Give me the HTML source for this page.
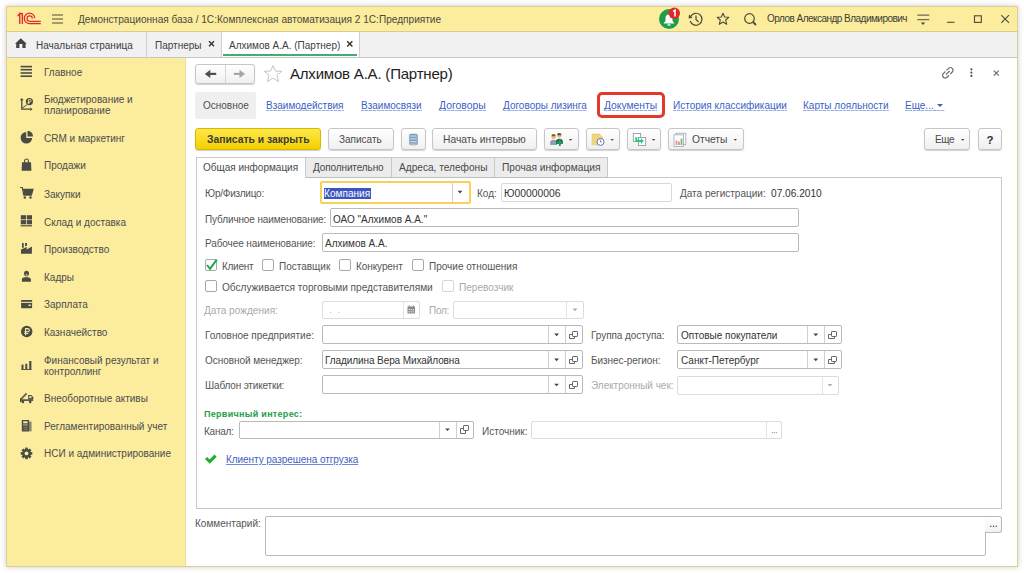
<!DOCTYPE html>
<html><head><meta charset="utf-8">
<style>
*{box-sizing:border-box;margin:0;padding:0}
html,body{width:1024px;height:573px;overflow:hidden;background:#fff;font-family:"Liberation Sans",sans-serif;color:#4d4d4d}
.a{position:absolute}
.t{position:absolute;font-size:10px;line-height:12px;white-space:nowrap}
#win{position:absolute;left:6px;top:6px;width:1012px;height:561px;background:#fff;box-shadow:0 0 6px rgba(0,0,0,.2)}
#title{position:absolute;left:6px;top:6px;width:1012px;height:26px;background:#fbec9e;border-bottom:1px solid #d8cc8e}
#tabs{position:absolute;left:6px;top:32px;width:1012px;height:26px;background:#f1f1f1;border-bottom:1px solid #c6c6c6}
#side{position:absolute;left:6px;top:58px;width:180px;height:509px;background:#fbec9e;border-right:1px solid #ecdc92}
#wb{position:absolute;left:6px;top:6px;width:1012px;height:561px;border:1px solid #dcd090;pointer-events:none}
svg{position:absolute;overflow:visible}
.sep{position:absolute;top:32px;width:1px;height:25px;background:#cfcfcf}
.si{color:#4d4d4d}
.lk{color:#3d5fc4}.lk::after{content:"";position:absolute;left:0;right:0;top:10px;height:1px;background:repeating-linear-gradient(90deg,#9aaee4 0 3px,#d3dbf4 3px 4px)}
.btn{position:absolute;height:22px;border:1px solid #c6c6c6;border-radius:3px;background:linear-gradient(#ffffff,#f0f0f0);box-shadow:0 1px 1px rgba(0,0,0,.18)}
.fld{position:absolute;height:19px;border:1px solid #b9b9b9;border-radius:2px;background:#fff}
.fld.dis{border-color:#dcdcdc}
.dv{position:absolute;top:0;bottom:0;width:1px;background:#d0d0d0}
.lbl{color:#555}
.gray{color:#aaa}
.cb{position:absolute;width:12px;height:12px;border:1px solid #a8a8a8;border-radius:2px;background:#fff}
.cb.dis{border-color:#d6d6d6}
.arr{position:absolute;width:0;height:0;border-left:3px solid transparent;border-right:3px solid transparent;border-top:3px solid #444}
</style></head><body>
<div id="win"></div>
<div id="title"></div>
<div id="tabs"></div>
<div id="side"></div>
<div id="wb"></div>

<!-- TITLE BAR -->
<svg style="left:0;top:0" width="1024" height="32">
  <g fill="none" stroke="#e02a2a" stroke-width="1.25">
    <path d="M19.7 14 H22.4 V23.9 H19.7 Z" fill="#f6cfa0" stroke="none"/>
    <path d="M17.7 16.2 L19.7 13.5 V23.9 M19.7 13.5 H22.4 V23.9"/>
    <path d="M34.7 18.3 A5.2 5.2 0 1 0 29.5 23.6 H40.8"/>
    <path d="M32.4 18.5 A2.7 2.7 0 1 0 29.7 21.3 H40.8"/>
    <path d="M33.6 18.4 A4 4 0 1 0 29.6 22.4 H40" stroke="#f6c8a0" stroke-width=".7"/>
  </g>
  <g stroke="#86825f" stroke-width="1.5">
    <path d="M52 15H63M52 19.1H63M52 23.1H63"/>
  </g>
  <!-- bell -->
  <circle cx="669" cy="19" r="10" fill="#1f9d4b"/>
  <path d="M663.5 23.5 L665.5 21 L665.5 18 A3.5 3.5 0 0 1 672.5 18 L672.5 21 L674.5 23.5 Z" fill="#fff"/>
  <rect x="667.5" y="24.3" width="3" height="1.3" fill="#fff"/>
  <circle cx="674.3" cy="13.3" r="5.7" fill="#e3262b"/>
  <path d="M673.2 11.5 L675 10.2 L675 16.5" stroke="#fff" stroke-width="1.6" fill="none"/>
  <!-- history -->
  <g fill="none" stroke="#4a4a3a" stroke-width="1.2">
    <path d="M690.6 16.5 A6 6 0 1 1 690.2 21"/>
    <path d="M696 15.5 L696 19.5 L698.5 22"/>
  </g>
  <path d="M689 14.5 L692.5 17.8 L688.6 18.6 Z" fill="#4a4a3a"/>
  <!-- star -->
  <path d="M723 13.2 L724.7 17 L728.8 17.3 L725.7 20 L726.7 24.3 L723 22 L719.3 24.3 L720.3 20 L717.2 17.3 L721.3 17 Z" fill="none" stroke="#4a4a3a" stroke-width="1.1" stroke-linejoin="round"/>
  <!-- search -->
  <circle cx="749.5" cy="18.5" r="4.8" fill="none" stroke="#4a4a3a" stroke-width="1.2"/>
  <path d="M753 22 L756 25" stroke="#4a4a3a" stroke-width="1.8"/>
  <!-- filter -->
  <path d="M917.3 15.2H929.2M917.3 19.6H929.2" stroke="#6f6b52" stroke-width="1.3"/>
  <path d="M920.8 22.4 L925.2 22.4 L923 24.9 Z" fill="#4a4a3a"/>
  <!-- min max close -->
  <path d="M947 22.3H954.5" stroke="#4a4a3a" stroke-width="1.1"/>
  <rect x="974.5" y="15.8" width="6.8" height="6.6" fill="none" stroke="#4a4a3a" stroke-width="1.1"/>
  <path d="M1001.3 15.2 L1009 22.8 M1009 15.2 L1001.3 22.8" stroke="#4a4a3a" stroke-width="1.1"/>
</svg>
<div class="t" style="left:78px;top:14px;font-size:10.1px;color:#4a4a3a">Демонстрационная база / 1С:Комплексная автоматизация 2 1С:Предприятие</div>
<div class="t" style="left:767px;top:13px;font-size:10px;letter-spacing:-0.52px;color:#404035">Орлов Александр Владимирович</div>

<!-- OPEN TABS -->
<div class="a" style="left:147px;top:32px;width:74px;height:25px;background:#f1f1f1"></div>
<div class="a" style="left:221px;top:32px;width:138px;height:25px;background:#fff"></div>
<div class="sep" style="left:146px"></div>
<div class="sep" style="left:221px"></div>
<div class="sep" style="left:359px"></div>
<div class="a" style="left:223px;top:54px;width:134px;height:2px;background:#3fb06a"></div>
<svg style="left:0;top:0" width="400" height="60">
  <path d="M15 43.8 L20.85 38.2 L26.7 43.8 L25.6 43.8 L25.6 47.9 L22.4 47.9 L22.4 44 L19.4 44 L19.4 47.9 L16.2 47.9 L16.2 43.8 Z" fill="#444"/>
  <path d="M209 41.2 L214 46.2 M214 41.2 L209 46.2" stroke="#333" stroke-width="1.4"/>
  <path d="M347.2 41.2 L352.4 46.4 M352.4 41.2 L347.2 46.4" stroke="#333" stroke-width="1.4"/>
</svg>
<div class="t" style="left:36px;top:40px;color:#404040">Начальная страница</div>
<div class="t" style="left:155px;top:40px;color:#404040">Партнеры</div>
<div class="t" style="left:229px;top:40px;color:#404040">Алхимов А.А. (Партнер)</div>


<!-- SIDEBAR -->
<svg style="left:0;top:0" width="186" height="573">
 <g fill="#4b4b45">
  <!-- glavnoe -->
  <rect x="20.6" y="65.8" width="11.4" height="1.6"/>
  <rect x="20.6" y="68.9" width="11.4" height="1.6"/>
  <rect x="20.6" y="72.2" width="11.4" height="1.6"/>
  <rect x="20.6" y="75.4" width="11.4" height="1.6"/>
  <!-- budget -->
  <g fill="none" stroke="#4b4b45" stroke-width="1.3">
   <path d="M21.8 99.5 V109.2 H30.5"/>
   <path d="M22.3 108 L26.8 104.8" stroke-width="1"/>
  </g>
  <path d="M19.9 100.2 L21.8 98 L23.7 100.2Z M30.3 107.3 L32.5 109.2 L30.3 111.1Z"/>
  <circle cx="29.4" cy="101.6" r="3.6"/>
  <path d="M28.4 99.6 h1.6 a1.1 1.1 0 0 1 0 2.2 h-1.6 M28.4 99.6 v4.4 M27.5 102.8 h2.4" stroke="#fbec9e" stroke-width=".8" fill="none"/>
  <!-- crm pie -->
  <path d="M26.2 132 A5.8 5.8 0 1 0 32.2 138 L26.2 138 Z"/>
  <path d="M27.5 130.8 A5.5 5.5 0 0 1 33 136.5 L27.5 136.5 Z"/>
  <!-- bag -->
  <path d="M22 162.2 H31 L31.4 170.7 H21.6 Z"/>
  <path d="M24.6 163 V161 A1.9 2 0 0 1 28.4 161 V163" fill="none" stroke="#4b4b45" stroke-width="1.1"/>
  <!-- cart -->
  <path d="M20.2 187.5 H22.3 L23.8 195.2 H31.3 L33 189.3 H22.8" fill="none" stroke="#4b4b45" stroke-width="1.2"/>
  <path d="M23 189.3 H33 L31.4 195 H24 Z"/>
  <circle cx="24.8" cy="197.5" r="1.2"/><circle cx="30.5" cy="197.5" r="1.2"/>
  <!-- sklad -->
  <rect x="20.8" y="215.2" width="5.2" height="4.2"/><rect x="26.8" y="215.2" width="5.2" height="4.2"/>
  <rect x="20.8" y="220.1" width="5.2" height="4.2"/><rect x="26.8" y="220.1" width="5.2" height="4.2"/>
  <rect x="20.6" y="225.2" width="11.4" height="1.2"/>
  <!-- factory -->
  <path d="M21 253.8 V249.6 L26.7 246.9 V249.5 L31.9 246.4 V253.8 Z"/><rect x="22" y="243" width="1.7" height="4.8"/><path d="M25.1 243 H27 V245.5 L25.1 246.4 Z"/>
  <!-- person -->
  <ellipse cx="26.5" cy="273.6" rx="2.5" ry="2.8"/>
  <ellipse cx="26.5" cy="275" rx="1.2" ry="1.3" fill="#fbec9e" opacity=".55"/>
  <path d="M21.9 281.7 V279.6 Q21.9 277.4 24.6 277.3 H28.2 Q30.9 277.4 30.9 279.6 V281.7 Z"/>
  <!-- card -->
  <rect x="21.1" y="299.9" width="11" height="8.3" rx=".6"/>
  <rect x="21.1" y="301.8" width="11" height="1.1" fill="#fbec9e"/>
  <rect x="28.4" y="304.6" width="2.6" height="1.3" fill="#fbec9e"/>
  <!-- ruble -->
  <circle cx="26.7" cy="331.5" r="5.7"/>
  <path d="M25.6 335.3 V328.6 H27.7 A1.6 1.6 0 0 1 27.7 331.8 H24.3 M24.3 333.5 H28.3" stroke="#fbec9e" stroke-width="1.1" fill="none"/>
  <!-- bars -->
  <rect x="21.5" y="364.6" width="2" height="4.7"/>
  <rect x="25.3" y="363.8" width="2" height="5.5"/>
  <rect x="29.2" y="361" width="2.2" height="8.3"/>
  <rect x="21.3" y="369" width="10.3" height=".9"/>
  <!-- truck -->
  <path d="M20.4 398.4 L25.9 392.8 L27.3 394.1 L21.9 399.6 Z" opacity=".85"/>
  <rect x="20" y="398.2" width="1.4" height="4"/>
  <rect x="21" y="399.3" width="12.2" height="1.6"/>
  <path d="M28.2 399.6 V395 H31.4 L33.2 397.2 V399.6 Z"/>
  <rect x="29.3" y="396.1" width="2.2" height="2" fill="#fbec9e"/>
  <circle cx="22.9" cy="401.9" r="1.3"/><circle cx="30.2" cy="401.9" r="1.3"/>
  <!-- calc -->
  <rect x="29" y="421.6" width="2.6" height="9.7" opacity=".6"/>
  <rect x="21.8" y="420" width="7.3" height="11.4" rx=".5"/>
  <rect x="23.2" y="421.3" width="4.4" height="2" fill="#fbec9e"/>
  <rect x="23" y="424.3" width="4.8" height="1.3" fill="#fbec9e" opacity=".55"/>
  <g fill="#fbec9e" opacity=".35"><rect x="22.8" y="427.4" width="5.3" height=".6"/><rect x="22.8" y="429.3" width="5.3" height=".6"/><rect x="24.7" y="426.2" width=".6" height="4.4"/><rect x="26.5" y="426.2" width=".6" height="4.4"/></g>
  <!-- gear -->
  <g transform="translate(26.5 453.4)">
   <circle r="4.3"/>
   <g id="teeth"><rect x="-1.3" y="-5.8" width="2.6" height="11.6"/><rect x="-1.3" y="-5.8" width="2.6" height="11.6" transform="rotate(45)"/><rect x="-1.3" y="-5.8" width="2.6" height="11.6" transform="rotate(90)"/><rect x="-1.3" y="-5.8" width="2.6" height="11.6" transform="rotate(135)"/></g>
   <circle r="1.9" fill="#fbec9e"/>
  </g>
 </g>
</svg>
<div class="t si" style="left:44px;top:67px">Главное</div>
<div class="t si" style="left:44px;top:94px;line-height:11px">Бюджетирование и<br>планирование</div>
<div class="t si" style="left:44px;top:133px">CRM и маркетинг</div>
<div class="t si" style="left:44px;top:160px">Продажи</div>
<div class="t si" style="left:44px;top:189px">Закупки</div>
<div class="t si" style="left:44px;top:217px">Склад и доставка</div>
<div class="t si" style="left:44px;top:244px">Производство</div>
<div class="t si" style="left:44px;top:272px">Кадры</div>
<div class="t si" style="left:44px;top:299px">Зарплата</div>
<div class="t si" style="left:44px;top:327px">Казначейство</div>
<div class="t si" style="left:44px;top:355px;line-height:11px">Финансовый результат и<br>контроллинг</div>
<div class="t si" style="left:44px;top:393px">Внеоборотные активы</div>
<div class="t si" style="left:44px;top:421px">Регламентированный учет</div>
<div class="t si" style="left:44px;top:448px">НСИ и администрирование</div>

<!-- MAIN HEADER -->
<div class="btn" style="left:195px;top:64px;width:60px;height:20px;border-radius:3px"></div>
<div class="a" style="left:225px;top:65px;width:1px;height:18px;background:#d6d6d6"></div>
<svg style="left:0;top:0" width="1024" height="200">
  <path d="M216.2 73.9 H209" fill="none" stroke="#505050" stroke-width="2.2"/><path d="M204.8 73.9 L210.3 69.8 L210.3 78 Z" fill="#505050"/>
  <path d="M233.9 73.9 H240" fill="none" stroke="#a6a6a6" stroke-width="2.2"/><path d="M245 73.9 L239.5 69.8 L239.5 78 Z" fill="#a6a6a6"/>
  <path d="M273 65.5 L275.4 71 L281.8 71.4 L276.9 75.3 L278.6 81.6 L273 78.1 L267.4 81.6 L269.1 75.3 L264.2 71.4 L270.6 71 Z" fill="none" stroke="#b9bdc6" stroke-width=".9" stroke-linejoin="round"/>
  <!-- link icon -->
  <g fill="none" stroke="#6b6b6b" stroke-width="1.2" transform="translate(947.8 72.8) rotate(-45)">
    <path d="M-0.8 -2.6 H-3.7 A2.6 2.6 0 0 0 -3.7 2.6 H-0.8"/>
    <path d="M0.8 2.6 H3.7 A2.6 2.6 0 0 0 3.7 -2.6 H0.8"/>
    <path d="M-2.6 0 H2.6"/>
  </g>
  <circle cx="971.4" cy="69.3" r="1.1" fill="#505050"/><circle cx="971.4" cy="72.6" r="1.1" fill="#505050"/><circle cx="971.4" cy="75.9" r="1.1" fill="#505050"/>
  <path d="M993.8 70.6 L998.8 75.6 M998.8 70.6 L993.8 75.6" stroke="#707070" stroke-width="1.3"/>
</svg>
<div class="t" style="left:290px;top:66px;font-size:15px;letter-spacing:-0.2px;line-height:16px;color:#222">Алхимов А.А. (Партнер)</div>

<!-- NAV LINKS -->
<div class="a" style="left:195px;top:92px;width:61px;height:27px;background:#efefef;border-radius:2px"></div>
<div class="t" style="left:203px;top:100px;color:#505050">Основное</div>
<div class="t lk" style="left:266px;top:100px">Взаимодействия</div>
<div class="t lk" style="left:361px;top:100px">Взаимосвязи</div>
<div class="t lk" style="left:439px;top:100px;font-size:10.4px">Договоры</div>
<div class="t lk" style="left:503px;top:100px">Договоры лизинга</div>
<div class="t lk" style="left:604px;top:100px;font-size:10.3px">Документы</div>
<div class="t lk" style="left:673px;top:100px">История классификации</div>
<div class="t lk" style="left:803px;top:100px">Карты лояльности</div>
<div class="t lk" style="left:905px;top:100px;width:40px">Еще...</div>
<div class="a" style="left:936.5px;top:104px;width:0;height:0;border-left:3px solid transparent;border-right:3px solid transparent;border-top:3.6px solid #3d5fc4"></div>
<div class="a" style="left:597px;top:92px;width:68px;height:26px;border:3.3px solid #e4382c;border-radius:5px"></div>

<!-- TOOLBAR -->
<div class="a" style="left:195px;top:128px;width:126px;height:22px;border:1px solid #d9b800;border-radius:3px;background:linear-gradient(#fde84a,#f4d000);box-shadow:0 1px 1px rgba(0,0,0,.2)"></div>
<div class="t" style="left:207px;top:134px;font-weight:bold;font-size:10.35px;color:#3a3a3a">Записать и закрыть</div>
<div class="btn" style="left:328px;top:128px;width:66px"></div>
<div class="t" style="left:339px;top:134px;color:#4a4a4a">Записать</div>
<div class="btn" style="left:401px;top:128px;width:25px"></div>
<div class="btn" style="left:432px;top:128px;width:105px"></div>
<div class="t" style="left:443px;top:134px;color:#4a4a4a;font-size:10.3px">Начать интервью</div>
<div class="btn" style="left:544px;top:128px;width:35px"></div>
<div class="btn" style="left:586px;top:128px;width:34px"></div>
<div class="btn" style="left:627px;top:128px;width:34px"></div>
<div class="btn" style="left:668px;top:128px;width:76px"></div>
<div class="t" style="left:692px;top:134px;color:#4a4a4a;font-size:10.25px">Отчеты</div>
<div class="btn" style="left:924px;top:128px;width:46px"></div>
<div class="t" style="left:935px;top:134px;color:#4a4a4a;font-size:10px;letter-spacing:-0.339px">Еще</div>
<div class="btn" style="left:978px;top:128px;width:24px"></div>
<div class="t" style="left:986.5px;top:134px;color:#333;font-weight:bold;font-size:11.5px">?</div>
<svg style="left:0;top:0" width="1024" height="200">
  <!-- list icon -->
  <rect x="409.2" y="133.8" width="8.6" height="11.4" rx="1.6" fill="#7f9cb8"/>
  <g fill="#cfe0ef"><rect x="410.2" y="135.5" width="6.6" height="1.1"/><rect x="410.2" y="138.3" width="6.6" height="1.1"/><rect x="410.2" y="141.1" width="6.6" height="1.1"/><rect x="410.2" y="143.6" width="6.6" height="0.9"/></g>
  <!-- people -->
  <path d="M550.2 145 V142.5 Q550.2 140 553.6 139.8 Q557 140 557 142.5 V145 Z" fill="#7d9fc6"/>
  <path d="M553.2 140 L554 140 L554.2 145 L553 145 Z" fill="#e08a6a"/>
  <circle cx="553.6" cy="136.9" r="2.2" fill="#e8c068"/>
  <path d="M551.4 136.3 A2.2 2.2 0 0 1 555.8 136.3 Z" fill="#8a5a20"/>
  <path d="M556 144 V141.5 Q556 139 559.4 138.8 Q562.8 139 562.8 141.5 V144 Z" fill="#3d4a78"/>
  <circle cx="559.3" cy="135.7" r="2.2" fill="#ecc870"/>
  <path d="M557.1 135.2 A2.2 2.2 0 0 1 561.5 135.2 Z" fill="#4a4a6a"/>
  <path d="M559.8 139.3 V146 M556.5 142.7 H563" stroke="#1aa64a" stroke-width="1.9"/>
  <path d="M568.9 139 H572.3 L570.6 140.7 Z" fill="#444"/>
  <!-- doc clock -->
  <path d="M592 134 H599.5 L602.4 137 V144.8 H592 Z" fill="#efd67c" stroke="#e2c25a" stroke-width=".5"/>
  <circle cx="600.5" cy="141.9" r="3.5" fill="#fff" stroke="#4d80c0" stroke-width="1"/>
  <path d="M600.4 139.6 V142 H602" stroke="#d84a4a" stroke-width=".8" fill="none"/>
  <path d="M610.5 139 H613.9 L612.2 140.7 Z" fill="#444"/>
  <!-- docs arrow -->
  <rect x="633.3" y="133.4" width="7.4" height="8.2" fill="#fff" stroke="#8392a6" stroke-width=".8"/>
  <rect x="638.5" y="137.4" width="7.2" height="8.2" fill="#fff" stroke="#8392a6" stroke-width=".8"/>
  <path d="M636.3 137.2 V141 H641.5" fill="none" stroke="#22cc70" stroke-width="2"/>
  <path d="M641 138.3 L643.8 141 L641 143.7 Z" fill="#22cc70"/>
  <path d="M651.9 139 H655.3 L653.6 140.7 Z" fill="#444"/>
  <!-- reports -->
  <rect x="676.2" y="133.2" width="9.6" height="11.4" fill="#fff" stroke="#98a6b8" stroke-width=".8"/>
  <rect x="674" y="134.8" width="9.6" height="11.6" fill="#fff" stroke="#98a6b8" stroke-width=".8"/>
  <rect x="675.6" y="140.5" width="1.8" height="4.6" fill="#f08a80"/>
  <rect x="678.1" y="141.5" width="1.8" height="3.6" fill="#f08a80"/>
  <rect x="680.6" y="138.5" width="1.8" height="6.6" fill="#6cc070"/>
  <path d="M733.6 139 H737 L735.3 140.7 Z" fill="#444"/>
  <path d="M961 139 H964.4 L962.7 140.7 Z" fill="#444"/>
</svg>

<!-- FORM TABS -->
<div class="a" style="left:196px;top:177px;width:806px;height:332px;border:1px solid #c9c9c9"></div>
<div class="a" style="left:305px;top:157px;width:303px;height:21px;background:#ececec;border:1px solid #c9c9c9;border-bottom-color:#bdbdbd"></div>
<div class="a" style="left:391px;top:158px;width:1px;height:19px;background:#c9c9c9"></div>
<div class="a" style="left:494px;top:158px;width:1px;height:19px;background:#c9c9c9"></div>
<div class="a" style="left:196px;top:157px;width:110px;height:21px;background:#fff;border:1px solid #c9c9c9;border-bottom:none"></div>
<div class="t" style="left:203px;top:162px;color:#4a4a4a">Общая информация</div>
<div class="t" style="left:313px;top:162px;color:#4a4a4a;font-size:10px;letter-spacing:-0.111px">Дополнительно</div>
<div class="t" style="left:399px;top:162px;color:#4a4a4a;font-size:10.15px">Адреса, телефоны</div>
<div class="t" style="left:502px;top:162px;color:#4a4a4a;font-size:10.2px">Прочая информация</div>

<!-- ROW 1 -->
<div class="t lbl" style="left:205px;top:188px;font-size:10px;letter-spacing:-0.224px">Юр/Физлицо:</div>
<div class="a" style="left:320px;top:181px;width:151px;height:23px;border:2px solid #f7d257;border-radius:2px;background:#fff"></div>
<div class="a" style="left:452px;top:183px;width:1px;height:19px;background:#d0d0d0"></div>
<div class="a" style="left:324px;top:188px;width:47px;height:11px;background:#3c56c0"></div>
<div class="t" style="left:324px;top:188px;color:#fff;font-size:10.1px">Компания</div>
<div class="t lbl" style="left:477px;top:188px">Код:</div>
<div class="fld " style="left:501px;top:183px;width:171px;height:19px;border-color:#d8d8d8"></div>

<div class="t" style="left:504px;top:188px;color:#333;font-size:10.35px">Ю00000006</div>
<div class="t lbl" style="left:680px;top:188px">Дата регистрации:</div>
<div class="t" style="left:771px;top:188px;color:#333;font-size:10.15px">07.06.2010</div>

<!-- ROW 2,3 -->
<div class="t lbl" style="left:205px;top:214px;font-size:10px;letter-spacing:-0.124px">Публичное наименование:</div>
<div class="fld " style="left:330px;top:208px;width:469px;height:19px;"></div>

<div class="t" style="left:333px;top:214px;color:#333">ОАО "Алхимов А.А."</div>
<div class="t lbl" style="left:205px;top:238px;font-size:10px;letter-spacing:-0.096px">Рабочее наименование:</div>
<div class="fld " style="left:322px;top:233px;width:477px;height:19px;"></div>

<div class="t" style="left:325px;top:238px;color:#333">Алхимов А.А.</div>

<!-- CHECKBOXES -->
<div class="cb" style="left:205px;top:259px"></div>
<div class="t lbl" style="left:222px;top:261px;font-size:10px;letter-spacing:-0.274px">Клиент</div>
<div class="cb" style="left:262px;top:259px"></div>
<div class="t lbl" style="left:279px;top:261px">Поставщик</div>
<div class="cb" style="left:339px;top:259px"></div>
<div class="t lbl" style="left:356px;top:261px;font-size:10px;letter-spacing:-0.079px">Конкурент</div>
<div class="cb" style="left:412px;top:259px"></div>
<div class="t lbl" style="left:429px;top:261px">Прочие отношения</div>
<div class="cb" style="left:205px;top:280px"></div>
<div class="t lbl" style="left:222px;top:282px;font-size:10.08px">Обслуживается торговыми представителями</div>
<div class="cb dis" style="left:442px;top:280px"></div>
<div class="t gray" style="left:459px;top:282px;font-size:10.1px">Перевозчик</div>

<!-- ROW 6 -->
<div class="t gray" style="left:204px;top:305px;font-size:10.08px">Дата рождения:</div>
<div class="fld dis" style="left:322px;top:301px;width:98px;height:18px;"><div class="dv" style="left:80px;background:#e4e4e4"></div></div>


<div class="t gray" style="left:429px;top:305px;font-size:10px;letter-spacing:-0.264px">Пол:</div>
<div class="fld dis" style="left:453px;top:301px;width:131px;height:18px;"><div class="dv" style="left:112px;background:#e4e4e4"></div></div>


<!-- ROW 7-9 -->
<div class="t lbl" style="left:205px;top:330px">Головное предприятие:</div>
<div class="fld " style="left:322px;top:325px;width:261px;height:19px;"><div class="dv" style="left:225px"></div><div class="dv" style="left:242px"></div></div>

<div class="t lbl" style="left:205px;top:355px;font-size:10px;letter-spacing:-0.044px">Основной менеджер:</div>
<div class="fld " style="left:322px;top:350px;width:261px;height:19px;"><div class="dv" style="left:225px"></div><div class="dv" style="left:242px"></div></div>

<div class="t" style="left:325px;top:355px;color:#333;font-size:10px;letter-spacing:-0.088px">Гладилина Вера Михайловна</div>
<div class="t lbl" style="left:205px;top:380px;font-size:10px;letter-spacing:-0.169px">Шаблон этикетки:</div>
<div class="fld " style="left:322px;top:375px;width:261px;height:19px;"><div class="dv" style="left:225px"></div><div class="dv" style="left:242px"></div></div>

<div class="t lbl" style="left:591px;top:330px;font-size:10px;letter-spacing:-0.055px">Группа доступа:</div>
<div class="fld " style="left:677px;top:325px;width:165px;height:19px;"><div class="dv" style="left:129px"></div><div class="dv" style="left:146px"></div></div>

<div class="t" style="left:681px;top:330px;color:#333">Оптовые покупатели</div>
<div class="t lbl" style="left:591px;top:355px;font-size:10px;letter-spacing:-0.070px">Бизнес-регион:</div>
<div class="fld " style="left:677px;top:350px;width:165px;height:19px;"><div class="dv" style="left:129px"></div><div class="dv" style="left:146px"></div></div>

<div class="t" style="left:681px;top:355px;color:#333">Санкт-Петербург</div>
<div class="t gray" style="left:591px;top:380px;font-size:10px;letter-spacing:-0.031px">Электронный чек:</div>
<div class="fld dis" style="left:677px;top:376px;width:162px;height:19px;"><div class="dv" style="left:144px;background:#e4e4e4"></div></div>


<!-- ROW 10-12 -->
<div class="t" style="left:204px;top:408px;font-size:9px;letter-spacing:0.29px;font-weight:bold;color:#1f9d4a">Первичный интерес:</div>
<div class="t lbl" style="left:204px;top:426px;font-size:10px;letter-spacing:-0.249px">Канал:</div>
<div class="fld " style="left:239px;top:421px;width:235px;height:18px;"><div class="dv" style="left:199px"></div><div class="dv" style="left:216px"></div></div>

<div class="t lbl" style="left:482px;top:426px">Источник:</div>
<div class="fld dis" style="left:531px;top:421px;width:251px;height:18px;"><div class="dv" style="left:234px;background:#e4e4e4"></div></div>

<div class="t" style="left:226px;top:454px;font-size:10px;letter-spacing:-0.057px;color:#3d5fc4;text-decoration:underline;text-decoration-color:#6a8ad8">Клиенту разрешена отгрузка</div>

<!-- COMMENT -->
<div class="t lbl" style="left:195px;top:518px">Комментарий:</div>
<div class="fld " style="left:265px;top:516px;width:721px;height:40px;"></div>

<div class="a" style="left:985px;top:516px;width:17px;height:17px;border:1px solid #b9b9b9;border-left:none;border-radius:0 3px 3px 0;background:linear-gradient(#fff,#f2f2f2)"></div>

<svg style="left:0;top:0" width="1024" height="573">
  <path d="M457.6 190.8 H462.4 L460.0 193.4 Z" fill="#444"/><path d="M554.2 333.6 H559.0 L556.6 336.2 Z" fill="#444"/><path d="M554.2 358.6 H559.0 L556.6 361.2 Z" fill="#444"/><path d="M554.2 383.7 H559.0 L556.6 386.3 Z" fill="#444"/><path d="M813.4 333.6 H818.2 L815.8 336.2 Z" fill="#444"/><path d="M813.4 358.6 H818.2 L815.8 361.2 Z" fill="#444"/><path d="M827.6 384.0 H832.4 L830.0 386.6 Z" fill="#aaa"/><path d="M572.6 308.6 H577.4 L575.0 311.2 Z" fill="#aaa"/><path d="M445.1 428.5 H449.9 L447.5 431.1 Z" fill="#444"/>
  <g fill="none" stroke="#666" stroke-width="1"><rect x="572.5" y="331.5" width="5" height="5" rx=".6"/><path d="M572.5 334.5 H569.5 V338.5 H574.5 V336.5"/></g><g fill="none" stroke="#666" stroke-width="1"><rect x="572.5" y="356.5" width="5" height="5" rx=".6"/><path d="M572.5 359.5 H569.5 V363.5 H574.5 V361.5"/></g><g fill="none" stroke="#666" stroke-width="1"><rect x="572.5" y="381.5" width="5" height="5" rx=".6"/><path d="M572.5 384.5 H569.5 V388.5 H574.5 V386.5"/></g><g fill="none" stroke="#666" stroke-width="1"><rect x="831.5" y="331.5" width="5" height="5" rx=".6"/><path d="M831.5 334.5 H828.5 V338.5 H834.5 V336.5"/></g><g fill="none" stroke="#666" stroke-width="1"><rect x="831.5" y="356.5" width="5" height="5" rx=".6"/><path d="M831.5 359.5 H828.5 V363.5 H834.5 V361.5"/></g><g fill="none" stroke="#666" stroke-width="1"><rect x="463.5" y="425.5" width="5" height="5" rx=".6"/><path d="M463.5 428.5 H460.5 V433.5 H465.5 V430.5"/></g>
  <!-- calendar icon -->
  <rect x="407.5" y="306.5" width="7.5" height="7" fill="#8a8a8a"/>
  <g fill="#fff" opacity=".75"><rect x="408.5" y="309" width="1.4" height="1.2"/><rect x="410.6" y="309" width="1.4" height="1.2"/><rect x="412.7" y="309" width="1.4" height="1.2"/><rect x="408.5" y="311.2" width="1.4" height="1.2"/><rect x="410.6" y="311.2" width="1.4" height="1.2"/><rect x="412.7" y="311.2" width="1.4" height="1.2"/></g>
  <path d="M409.3 305.3 V307.3 M413.2 305.3 V307.3" stroke="#8a8a8a" stroke-width=".9"/>
  <circle cx="330.6" cy="312.6" r=".65" fill="#bbb"/><circle cx="339" cy="312.6" r=".65" fill="#bbb"/>
  <!-- checkmark -->
  <path d="M207 265 L210 268.8 L216.8 259.6" fill="none" stroke="#1fa64a" stroke-width="2"/>
  <path d="M206 458 L209.8 461.6 L215.6 455.6" fill="none" stroke="#22ad2e" stroke-width="3"/>
  <!-- dots -->
  <circle cx="990.7" cy="526.3" r=".8" fill="#555"/><circle cx="993.5" cy="526.3" r=".8" fill="#555"/><circle cx="996.3" cy="526.3" r=".8" fill="#555"/>
  <circle cx="772.3" cy="432.6" r=".6" fill="#888"/><circle cx="774.3" cy="432.6" r=".6" fill="#888"/><circle cx="776.3" cy="432.6" r=".6" fill="#888"/>
</svg>
</body></html>
